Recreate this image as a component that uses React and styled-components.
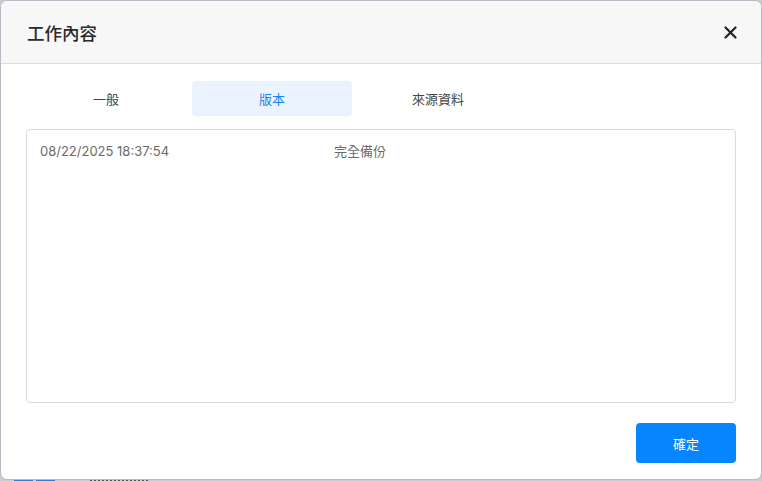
import React, { useState } from 'react';
import styled, { createGlobalStyle } from 'styled-components';

const GlobalStyle = createGlobalStyle`
  html, body {
    margin: 0;
    padding: 0;
    background: #c9ccd3;
    font-family: "Noto Sans", "Noto Sans CJK TC", sans-serif;
  }
`;

const Backdrop = styled.div`
  position: relative;
  width: 762px;
  height: 481px;
  overflow: hidden;
  background: #c9ccd3;
`;

// bits of the page behind the dialog, peeking out at the bottom
const Behind = styled.div`
  position: absolute;
  left: 0;
  bottom: 0;
  height: 2px;
  width: 100%;
  display: flex;
  align-items: flex-end;
  gap: 3px;
  padding-left: 14px;
  box-sizing: border-box;
  .chip {
    width: 19px;
    height: 1px;
    background: #2f7fe0;
  }
  .txt {
    margin-left: 32px;
    width: 58px;
    height: 1px;
    background: repeating-linear-gradient(90deg, #555 0 2px, transparent 2px 4px);
  }
`;

const Dialog = styled.div`
  position: absolute;
  left: 0;
  top: 0;
  width: 762px;
  height: 480px;
  box-sizing: border-box;
  border: 1px solid #b6bac4;
  border-radius: 7px;
  background: #fff;
  overflow: hidden;
  display: flex;
  flex-direction: column;
`;

const Header = styled.div`
  height: 62px;
  flex-shrink: 0;
  background: #f7f7f7;
  border-bottom: 1px solid #dcdde0;
  display: flex;
  align-items: center;
  justify-content: space-between;
  padding: 0 22px 0 26px;
`;

const Title = styled.h2`
  margin: 0;
  font-size: 17.5px;
  font-weight: 500;
  color: #2b2b2b;
`;

const CloseButton = styled.button`
  width: 18px;
  height: 18px;
  padding: 0;
  border: 0;
  background: none;
  display: flex;
  align-items: center;
  justify-content: center;
  cursor: pointer;
`;

const Body = styled.div`
  flex: 1;
  display: flex;
  flex-direction: column;
  padding: 17px 25px 16px 25px;
`;

const Tabs = styled.div`
  display: flex;
  gap: 6px;
  margin-bottom: 13px;
`;

const Tab = styled.button`
  width: 160px;
  height: 35px;
  border: 0;
  border-radius: 4px;
  font-family: inherit;
  font-size: 13px;
  cursor: pointer;
  background: ${p => (p.$active ? '#eaf3fe' : 'transparent')};
  color: ${p => (p.$active ? '#1683f5' : '#444')};
`;

const ListBox = styled.div`
  height: 274px;
  border: 1px solid #d7dadf;
  border-radius: 4px;
  padding: 11px 0 0 13px;
  box-sizing: border-box;
`;

const Row = styled.div`
  display: grid;
  grid-template-columns: 294px 1fr;
  font-family: "Inter", "Noto Sans CJK TC", sans-serif;
  font-size: 13px;
  color: #6a6a6a;
  line-height: 20px;
`;

const Footer = styled.div`
  display: flex;
  justify-content: flex-end;
  margin-top: 20px;
`;

const PrimaryButton = styled.button`
  width: 100px;
  height: 40px;
  border: 0;
  border-radius: 4px;
  background: #0586ff;
  color: #fff;
  font-family: inherit;
  font-size: 13px;
  cursor: pointer;
`;

const tabs = ['一般', '版本', '來源資料'];

const versions = [{ time: '08/22/2025 18:37:54', type: '完全備份' }];

export default function App() {
  const [active, setActive] = useState(1);

  return (
    <>
      <GlobalStyle />
      <Backdrop>
        <Behind>
          <span className="chip" />
          <span className="chip" />
          <span className="txt" />
        </Behind>
        <Dialog>
          <Header>
            <Title>工作內容</Title>
            <CloseButton aria-label="close">
              <svg width="13" height="13" viewBox="0 0 13 13">
                <path d="M1.5 1.5 L11.5 11.5 M11.5 1.5 L1.5 11.5" stroke="#222" strokeWidth="2.2" strokeLinecap="round" />
              </svg>
            </CloseButton>
          </Header>
          <Body>
            <Tabs>
              {tabs.map((t, i) => (
                <Tab key={t} $active={i === active} onClick={() => setActive(i)}>
                  {t}
                </Tab>
              ))}
            </Tabs>
            <ListBox>
              {versions.map(v => (
                <Row key={v.time}>
                  <span>{v.time}</span>
                  <span>{v.type}</span>
                </Row>
              ))}
            </ListBox>
            <Footer>
              <PrimaryButton>確定</PrimaryButton>
            </Footer>
          </Body>
        </Dialog>
      </Backdrop>
    </>
  );
}
